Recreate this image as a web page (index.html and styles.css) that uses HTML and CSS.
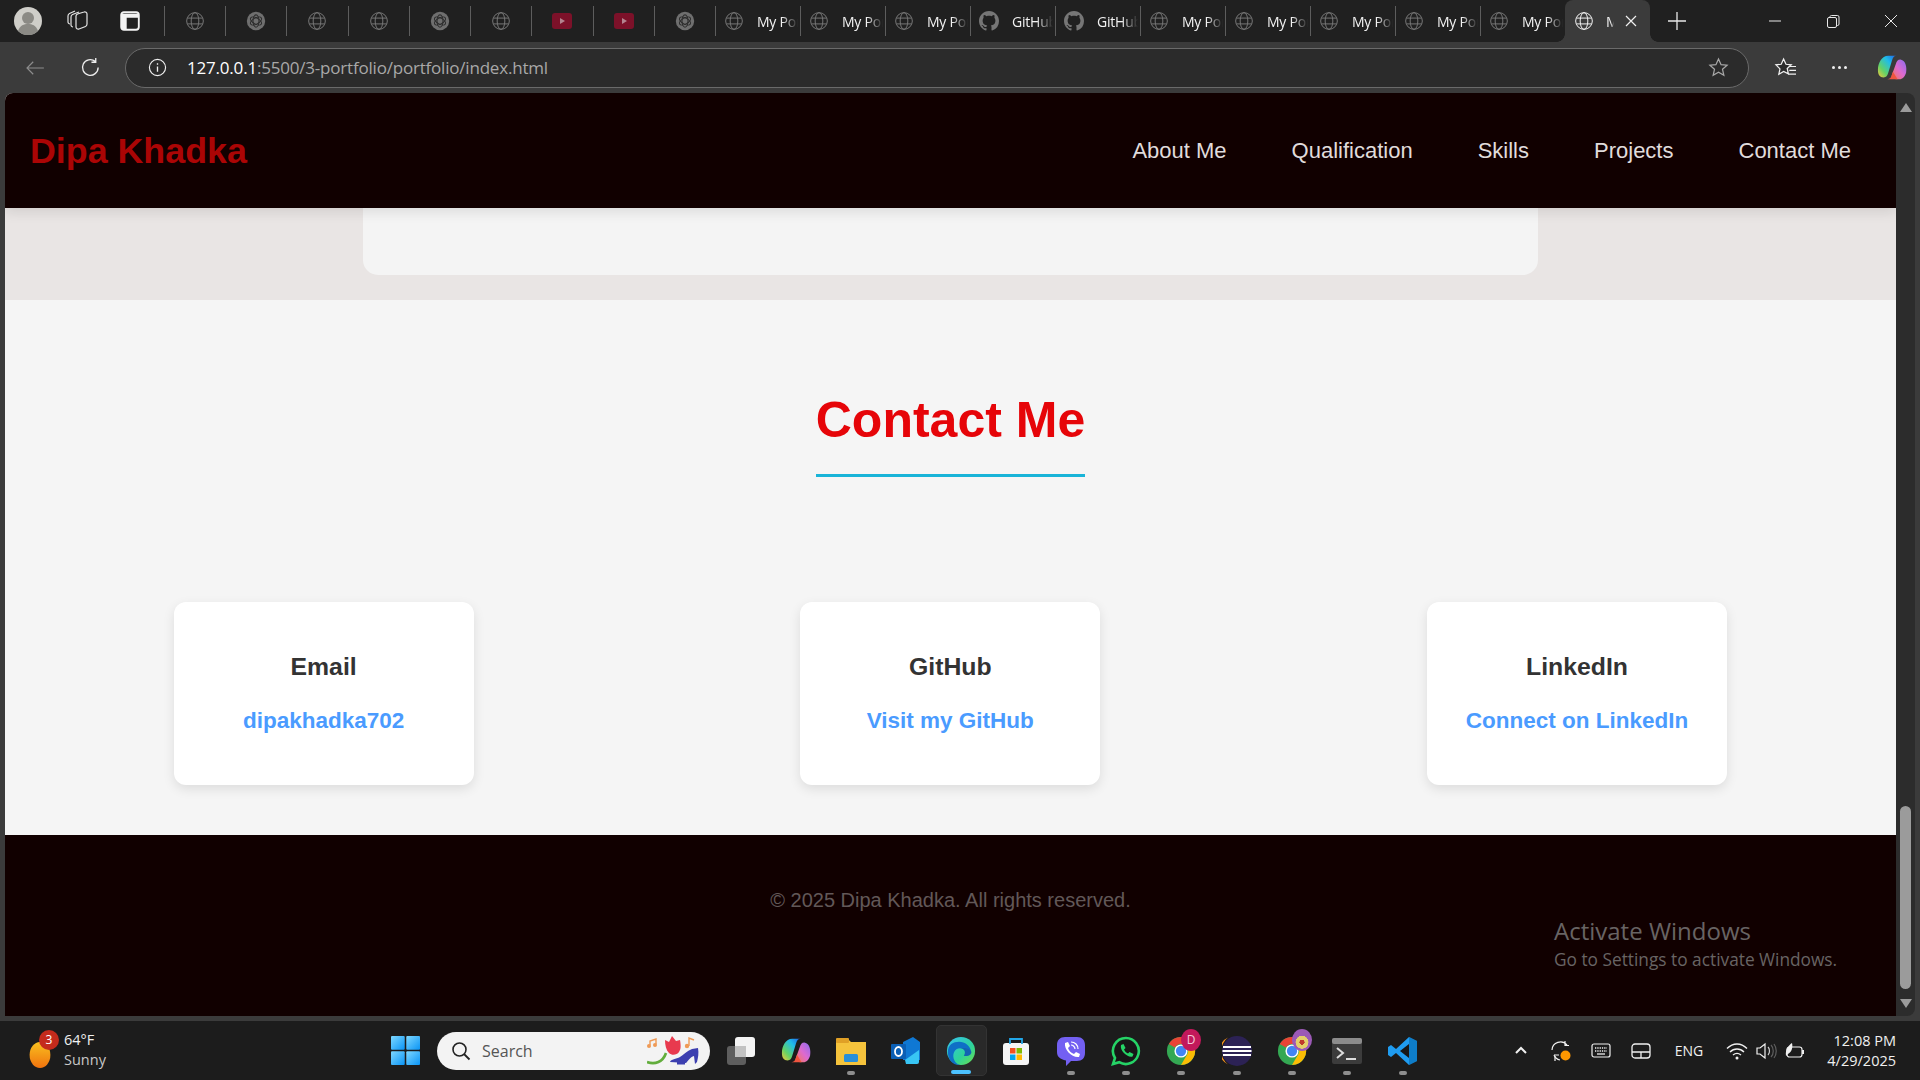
FILE: index.html
```html
<!DOCTYPE html>
<html lang="en">
<head>
<meta charset="utf-8">
<title>Dipa Khadka</title>
<link rel="stylesheet" href="styles.css">
</head>
<body>
<svg class="defs" width="0" height="0" aria-hidden="true">
  <defs>
    <linearGradient id="cpl" x1="1" y1="0" x2="0" y2="1"><stop offset="0" stop-color="#1f5fe8"/><stop offset=".35" stop-color="#20bde8"/><stop offset=".7" stop-color="#63d267"/><stop offset="1" stop-color="#f6c83a"/></linearGradient>
    <linearGradient id="cpr" x1="1" y1="0" x2="0" y2="1"><stop offset="0" stop-color="#8a6cf0"/><stop offset=".5" stop-color="#dd6ad0"/><stop offset="1" stop-color="#f6784f"/></linearGradient>
    <symbol id="globe" viewBox="0 0 24 24"><g fill="none" stroke="currentColor" stroke-width="1.2"><circle cx="12" cy="12" r="10"/><ellipse cx="12" cy="12" rx="4.6" ry="10"/><path d="M3 8.5h18M3 15.5h18"/></g></symbol>
    <symbol id="openai" viewBox="0 0 24 24"><circle cx="12" cy="12" r="11" fill="#6f6f6f"/><g fill="none" stroke="#2c2c2c" stroke-width="1.3"><ellipse cx="12" cy="12" rx="3.6" ry="7.4"/><ellipse cx="12" cy="12" rx="3.6" ry="7.4" transform="rotate(60 12 12)"/><ellipse cx="12" cy="12" rx="3.6" ry="7.4" transform="rotate(120 12 12)"/></g></symbol>
    <symbol id="yt" viewBox="0 0 20 16"><rect width="20" height="16" rx="3" fill="#7c1129"/><path d="M8 5l5 3-5 3z" fill="#b4848f"/></symbol>
    <symbol id="github" viewBox="0 0 16 16"><path fill="currentColor" d="M8 0C3.58 0 0 3.58 0 8c0 3.54 2.29 6.53 5.47 7.59.4.07.55-.17.55-.38 0-.19-.01-.82-.01-1.49-2.01.37-2.53-.49-2.69-.94-.09-.23-.48-.94-.82-1.13-.28-.15-.68-.52-.01-.53.63-.01 1.08.58 1.23.82.72 1.21 1.87.87 2.33.66.07-.52.28-.87.51-1.07-1.78-.2-3.64-.89-3.64-3.95 0-.87.31-1.59.82-2.15-.08-.2-.36-1.02.08-2.12 0 0 .67-.21 2.2.82.64-.18 1.32-.27 2-.27.68 0 1.36.09 2 .27 1.53-1.04 2.2-.82 2.2-.82.44 1.1.16 1.92.08 2.12.51.56.82 1.27.82 2.15 0 3.07-1.87 3.75-3.65 3.95.29.25.54.73.54 1.48 0 1.07-.01 1.93-.01 2.2 0 .21.15.46.55.38A8.013 8.013 0 0016 8c0-4.42-3.58-8-8-8z"/></symbol>
    <symbol id="chrome" viewBox="0 0 32 32"><circle cx="16" cy="16" r="15" fill="#34a853"/><path d="M16 1a15 15 0 0 1 13 7.5H16a7.5 7.5 0 0 0-6.5 3.75L3 8.5A15 15 0 0 1 16 1z" fill="#ea4335"/><path d="M29 8.5A15 15 0 0 1 16 31l6.5-11.25A7.5 7.5 0 0 0 22.500 12z" fill="#fbbc04"/><circle cx="16" cy="16" r="7" fill="#fff"/><circle cx="16" cy="16" r="5.500" fill="#4285f4"/></symbol>
    <symbol id="copilot" viewBox="0 0 32 32"><path d="M21 28h3c3 0 6-3 7-7 1-5 0-13-6-14-3 0-4 2-5 5l-4 11c-1 3-1 5 5 5z" fill="url(#cpr)"/><path d="M11 28c3 0 4-2 5-5l1-3 5 8z" fill="#ef5540"/><path d="M12 3h9c-3 0-4 2-5 5l-4 13c-1 3-2 5-5 5-4 0-6-3-6-8C1 11 5 3 12 3z" fill="url(#cpl)"/></symbol>
    <linearGradient id="wing" x1="0" y1="0" x2="1" y2="1"><stop offset="0" stop-color="#7ed8ff"/><stop offset="1" stop-color="#0a94f5"/></linearGradient>
    <linearGradient id="edgeg" x1="0" y1="0" x2="1" y2="1"><stop offset="0" stop-color="#35c1f1"/><stop offset=".6" stop-color="#2ed39a"/><stop offset="1" stop-color="#6fe04a"/></linearGradient>
    <linearGradient id="sun" x1="0" y1="0" x2="0" y2="1"><stop offset="0" stop-color="#f9c01f"/><stop offset="1" stop-color="#f0730e"/></linearGradient>
  </defs>
</svg>

<div class="strip">
  <div class="strip-tools">
    <svg class="avatar" viewBox="0 0 28 28"><circle cx="14" cy="14" r="14" fill="#cfcec9"/><circle cx="14" cy="11" r="6" fill="#8b8a85"/><path d="M4 24c2-6 6-7 10-7s8 1 10 7a14 14 0 0 1-20 0z" fill="#8b8a85"/></svg>
    <svg class="tool collections" viewBox="0 0 22 22"><g fill="none" stroke="#e4e4e4" stroke-width="1.200"><path d="M3 14c-1 0-2-1-2-2V6c0-1 .5-2 1.500-2.500L8 1"/><path d="M6 17c-1 0-2-1-2-2V7c0-1 .5-2 1.500-2.500L12 2"/><path d="M9 6c0-1 .5-1.500 1.500-2L17 2c1.500-.5 3 .5 3 2v10c0 1-.5 2-1.500 2.500L12 19c-1.500.5-3-.5-3-2z"/></g></svg>
    <svg class="tool vertical" viewBox="0 0 20 20"><rect x="2" y="2" width="16" height="16" rx="2.500" fill="none" stroke="#f2f2f2" stroke-width="1.700"/><path d="M2 3.500h16v3.500H7v11H4a2 2 0 0 1-2-2z" fill="#f2f2f2"/></svg>
  </div>
  <div class="pin"><svg class="fav"><use href="#globe"/></svg></div>
  <div class="pin"><svg class="fav"><use href="#openai"/></svg></div>
  <div class="pin"><svg class="fav"><use href="#globe"/></svg></div>
  <div class="pin"><svg class="fav"><use href="#globe"/></svg></div>
  <div class="pin"><svg class="fav"><use href="#openai"/></svg></div>
  <div class="pin"><svg class="fav"><use href="#globe"/></svg></div>
  <div class="pin"><svg class="fav"><use href="#yt"/></svg></div>
  <div class="pin"><svg class="fav"><use href="#yt"/></svg></div>
  <div class="pin"><svg class="fav"><use href="#openai"/></svg></div>
  <div class="tab"><svg class="fav"><use href="#globe"/></svg><span class="tab-title">My Portfolio</span></div>
  <div class="tab"><svg class="fav"><use href="#globe"/></svg><span class="tab-title">My Portfolio</span></div>
  <div class="tab"><svg class="fav"><use href="#globe"/></svg><span class="tab-title">My Portfolio</span></div>
  <div class="tab"><svg class="fav"><use href="#github"/></svg><span class="tab-title">GitHub</span></div>
  <div class="tab"><svg class="fav"><use href="#github"/></svg><span class="tab-title">GitHub</span></div>
  <div class="tab"><svg class="fav"><use href="#globe"/></svg><span class="tab-title">My Portfolio</span></div>
  <div class="tab"><svg class="fav"><use href="#globe"/></svg><span class="tab-title">My Portfolio</span></div>
  <div class="tab"><svg class="fav"><use href="#globe"/></svg><span class="tab-title">My Portfolio</span></div>
  <div class="tab"><svg class="fav"><use href="#globe"/></svg><span class="tab-title">My Portfolio</span></div>
  <div class="tab"><svg class="fav"><use href="#globe"/></svg><span class="tab-title">My Portfolio</span></div>
  <div class="tab tab-active"><svg class="fav fav-active"><use href="#globe"/></svg><span class="tab-title tab-title-short">My Portfolio</span>
    <svg class="tab-close" viewBox="0 0 12 12"><path d="M1 1l10 10M11 1L1 11" stroke="#f0f0f0" stroke-width="1.200"/></svg>
  </div>
  <svg class="newtab" viewBox="0 0 18 18"><path d="M9 0v18M0 9h18" stroke="#e8e8e8" stroke-width="1.300"/></svg>
  <div class="winctl">
    <svg class="win-btn" viewBox="0 0 14 14"><path d="M1 7h12" stroke="#e8e8e8" stroke-width="1"/></svg>
    <svg class="win-btn" viewBox="0 0 14 14"><g fill="none" stroke="#e8e8e8" stroke-width="1"><rect x="1.500" y="3.500" width="9" height="10" rx="1.500"/><path d="M4 3.500V2.500a1.500 1.500 0 0 1 1.500-1h6a1.500 1.500 0 0 1 1.500 1.500v7a1.500 1.500 0 0 1-1.500 1.500h-1"/></g></svg>
    <svg class="win-btn" viewBox="0 0 14 14"><path d="M1 1l12 12M13 1L1 13" stroke="#e8e8e8" stroke-width="1"/></svg>
  </div>
</div>

<div class="toolbar">
  <svg class="back" viewBox="0 0 22 18"><path d="M21 9H2M9 2L2 9l7 7" fill="none" stroke="#8d8d8d" stroke-width="1.300"/></svg>
  <svg class="reload" viewBox="0 0 22 22"><path d="M19 11a8.200 8.200 0 1 1-3-6.400M16.500 1v4.500H12" fill="none" stroke="#ededed" stroke-width="1.400"/></svg>
  <div class="address">
    <svg class="info" viewBox="0 0 20 20"><circle cx="10" cy="10" r="8.500" fill="none" stroke="#eee" stroke-width="1.200"/><path d="M10 9v5.500M10 5.500v1.500" stroke="#eee" stroke-width="1.400"/></svg>
    <span class="url"><span class="url-host">127.0.0.1</span>:5500/3-portfolio/portfolio/index.html</span>
    <svg class="star" viewBox="0 0 22 22"><path d="M11 2l2.700 6 6.300.6-4.800 4.300 1.400 6.300L11 16l-5.600 3.200 1.400-6.300L2 8.600 8.300 8z" fill="none" stroke="#a8a8a8" stroke-width="1.300"/></svg>
  </div>
  <svg class="favs" viewBox="0 0 24 22"><path d="M10 2l2.500 5.600 5.500.6-4.200 3.800 1.200 5.700L10 15.200 5 18.100l1.200-5.700L2 8.200l5.500-.6z" fill="#2b2b2b" stroke="#f0f0f0" stroke-width="1.300"/><path d="M16 10h7M16 14h7M15 18h8" stroke="#f0f0f0" stroke-width="1.200"/></svg>
  <div class="dots"><i></i><i></i><i></i></div>
  <svg class="edge-copilot"><use href="#copilot"/></svg>
</div>

<div class="window">
  <main class="page">
    <header class="site-header">
      <a class="logo">Dipa Khadka</a>
      <nav class="nav">
        <a>About Me</a>
        <a>Qualification</a>
        <a>Skills</a>
        <a>Projects</a>
        <a>Contact Me</a>
      </nav>
    </header>
    <section class="prev-section"><div class="prev-card"></div></section>
    <section class="contact">
      <h2 class="contact-title">Contact Me</h2>
      <div class="cards">
        <article class="card"><h3>Email</h3><a>dipakhadka702</a></article>
        <article class="card"><h3>GitHub</h3><a>Visit my GitHub</a></article>
        <article class="card"><h3>LinkedIn</h3><a>Connect on LinkedIn</a></article>
      </div>
    </section>
    <footer class="site-footer">© 2025 Dipa Khadka. All rights reserved.</footer>
    <div class="watermark"><div class="wm-title">Activate Windows</div><div class="wm-sub">Go to Settings to activate Windows.</div></div>
  </main>
  <div class="scrollbar">
    <span class="arrow-up"></span>
    <span class="thumb"></span>
    <span class="arrow-down"></span>
  </div>
</div>

<div class="taskbar">
  <div class="weather">
    <div class="weather-icon"><svg class="sun" viewBox="0 0 24 30"><ellipse cx="12" cy="15" rx="12" ry="15" fill="url(#sun)"/></svg><span class="badge">3</span></div>
    <div class="weather-text"><span class="temp">64°F</span><span class="cond">Sunny</span></div>
  </div>
  <svg class="start" viewBox="0 0 30 30"><rect width="14.200" height="14.200" rx="1" fill="url(#wing)"/><rect x="15.800" width="14.200" height="14.200" rx="1" fill="url(#wing)"/><rect y="15.800" width="14.200" height="14.200" rx="1" fill="url(#wing)"/><rect x="15.800" y="15.800" width="14.200" height="14.200" rx="1" fill="url(#wing)"/></svg>
  <div class="search">
    <svg class="search-icon" viewBox="0 0 20 20"><circle cx="8.500" cy="8.500" r="6.500" fill="none" stroke="#222" stroke-width="1.600"/><path d="M13 13l5.500 5.500" stroke="#222" stroke-width="1.800"/></svg>
    <span class="search-text">Search</span>
    <svg class="search-art" viewBox="0 0 52 30"><path d="M3 9V5l6-2v5" fill="none" stroke="#ef9a55" stroke-width="1.400"/><circle cx="2" cy="10" r="2" fill="#ef9a55"/><circle cx="8" cy="9" r="2" fill="#ef9a55"/><path d="M0 26c8 3 16 0 19-9" fill="none" stroke="#62ad3c" stroke-width="2.600"/><path d="M18 4l4 2 3-6 4 5 4-1c1 6 1 9-1 12s-7 4-10 1-4-8-4-13z" fill="#e83a4e"/><path d="M42 10V2l5 2" fill="none" stroke="#ef9a55" stroke-width="1.400"/><circle cx="40" cy="10" r="2.200" fill="#ef9a55"/><path d="M23 26c1-3 6-3 10-5 3-2 7-6 12-8l6-1c1 5 0 10-1 14l-2 2-1-8c-4 1-6 5-8 7z" fill="#3c3fb0"/><path d="M30 27h8" stroke="#3c3fb0" stroke-width="3"/></svg>
  </div>
  <div class="slot"><svg class="tb-icon" viewBox="0 0 30 30"><rect x="1" y="10" width="19" height="19" rx="3" fill="#5e5e5e"/><rect x="9" y="1" width="20" height="20" rx="3" fill="#f4f4f4"/><rect x="9" y="10" width="11" height="11" fill="#c2c2c2"/></svg></div>
  <div class="slot"><svg class="tb-icon"><use href="#copilot"/></svg></div>
  <div class="slot slot-open"><svg class="tb-icon" viewBox="0 0 30 30"><path d="M0 3h12l3 3h15v23H0z" fill="#f5c33c"/><rect y="2" width="13" height="5" rx="1" fill="#e0a026"/><rect x="8" y="18" width="14" height="8" rx="1.500" fill="#2a8fd8"/></svg></div>
  <div class="slot"><svg class="tb-icon" viewBox="0 0 30 30"><path d="M12 6l10-5 7 5v18H12z" fill="#0f78d4"/><path d="M14 24l14-10v12a2 2 0 0 1-2 2H15z" fill="#38c5f4"/><rect y="8" width="15" height="15" rx="1" fill="#0b5fb5"/><ellipse cx="7.500" cy="15.500" rx="3.500" ry="4.500" fill="none" stroke="#fff" stroke-width="1.800"/></svg></div>
  <div class="slot slot-active"><svg class="tb-icon" viewBox="0 0 32 32"><circle cx="16" cy="16" r="15" fill="url(#edgeg)"/><path d="M2 17C2 9 8 6 14 6c6 0 12 4 13 11 0 4-5 5-8 4 2-2 2-8-4-8-6 0-9 7-6 13 1 2 3 4 6 5-8 0-13-6-13-14z" fill="#0f6fc6"/><path d="M15 13c5 0 7 4 4 8 3 1 8 0 8-4-1-2-3-5-12-4z" fill="#1c4d8c" opacity=".35"/></svg></div>
  <div class="slot"><svg class="tb-icon" viewBox="0 0 30 30"><rect x="2" y="7" width="26" height="22" rx="3" fill="#f5f5f5"/><path d="M9 8V3h12v5" fill="none" stroke="#22a7e8" stroke-width="1.800"/><rect x="9" y="12" width="5.500" height="5.500" fill="#f25022"/><rect x="15.500" y="12" width="5.500" height="5.500" fill="#7fba00"/><rect x="9" y="18.500" width="5.500" height="5.500" fill="#00a4ef"/><rect x="15.500" y="18.500" width="5.500" height="5.500" fill="#ffb900"/></svg></div>
  <div class="slot slot-open"><svg class="tb-icon" viewBox="0 0 30 30"><path d="M9 1h12c5 0 8 3 8 8v8c0 5-3 8-8 8h-6l-5 5v-5.500C4 23 1 21 1 16V9c0-5 3-8 8-8z" fill="#7360f2"/><path d="M9 7l3-1 2 4-2 2c1 3 3 5 6 6l2-2 4 2-1 3c-7 1-15-7-14-14z" fill="#fff"/><path d="M15 6c4 0 7 3 7 7M15 9c2 0 4 2 4 4" fill="none" stroke="#fff" stroke-width="1.200"/></svg></div>
  <div class="slot slot-open"><svg class="tb-icon" viewBox="0 0 30 30"><path d="M15 2a13 13 0 0 0-11 20L2 28l6.200-1.800A13 13 0 1 0 15 2z" fill="#171717" stroke="#25d366" stroke-width="2.600"/><path d="M10 9l2.500-1 2 4-1.500 1.500c1 2 2 3 4 4l1.500-1.500 4 2-1 2.500c-5 1.500-13-6-11.500-11.500z" fill="#25d366"/></svg></div>
  <div class="slot slot-open"><svg class="tb-icon"><use href="#chrome"/></svg><span class="profile profile-d">D</span></div>
  <div class="slot slot-open slot-nudge"><svg class="tb-icon" viewBox="0 0 30 30"><circle cx="15" cy="15" r="15" fill="#2c2255"/><path d="M6 1.500A15 15 0 0 0 6 28.500 17 17 0 0 1 6 1.500z" fill="#f7941e"/><path d="M1 11h28M0.500 15h29M1 19h28" stroke="#fff" stroke-width="2"/></svg></div>
  <div class="slot slot-open"><svg class="tb-icon"><use href="#chrome"/></svg><span class="profile profile-a"></span></div>
  <div class="slot slot-open"><svg class="tb-icon" viewBox="0 0 30 30"><rect y="2" width="30" height="26" rx="2" fill="#3c3c3c"/><rect y="2" width="30" height="6" rx="2" fill="#8c8c8c"/><path d="M5 12l6 5-6 5" fill="none" stroke="#ddd" stroke-width="2"/><path d="M14 23h10" stroke="#ddd" stroke-width="2"/></svg></div>
  <div class="slot slot-open slot-nudge"><svg class="tb-icon" viewBox="0 0 30 30"><path d="M21 1l8 4v20l-8 4L8 17l-5 4-3-2v-8l3-2 5 4z" fill="#1f9cf0"/><path d="M21 8v14l-9-7z" fill="#171717"/><path d="M21 1l8 4v20l-8 4z" fill="#0065a9" opacity=".55"/></svg></div>
  <div class="tray">
    <span class="tray-slot"><svg class="tray-icon" viewBox="0 0 20 20"><path d="M5 11l5-5 5 5" transform="translate(0 1)" fill="none" stroke="#f0f0f0" stroke-width="2"/></svg></span>
    <span class="tray-slot"><svg class="tray-sync" viewBox="0 0 22 22"><path d="M2 10a8.500 8.500 0 0 1 15-5M15 1v4.500h4M4 15h5M5 21v-5" fill="none" stroke="#f0f0f0" stroke-width="1.200"/><path d="M4 15a8 8 0 0 0 6 5" fill="none" stroke="#f0f0f0" stroke-width="1.200"/><circle cx="15.500" cy="15.500" r="5" fill="#ff9800"/></svg></span>
    <span class="tray-slot"><svg class="tray-wide" viewBox="0 0 20 16"><rect x="1" y="1" width="18" height="13" rx="2" fill="none" stroke="#f0f0f0" stroke-width="1.200"/><path d="M4 5h12M4 8h12" stroke="#f0f0f0" stroke-width="1.500" stroke-dasharray="1.300 1"/><path d="M6 11h8" stroke="#f0f0f0" stroke-width="1.300"/></svg></span>
    <span class="tray-slot"><svg class="tray-wide" viewBox="0 0 20 16"><rect x="1" y="1" width="18" height="14" rx="3" fill="none" stroke="#f0f0f0" stroke-width="1.300"/><path d="M1 9h18M10 9v6" stroke="#f0f0f0" stroke-width="1.300"/></svg></span>
    <span class="tray-lang">ENG</span>
    <span class="tray-net"><svg class="tray-wifi" viewBox="0 0 22 18"><path d="M1 6.500c6-6 14-6 20 0M4 10c4-4 10-4 14 0M7 13c2.500-2 5.500-2 8 0" fill="none" stroke="#f0f0f0" stroke-width="1.400"/><circle cx="11" cy="16" r="1.500" fill="#f0f0f0"/></svg></span>
    <span class="tray-net"><svg class="tray-vol" viewBox="0 0 22 18"><path d="M2 6h3l5-4v14l-5-4H2z" fill="none" stroke="#f0f0f0" stroke-width="1.200"/><path d="M13 5c2 2 2 6 0 8" fill="none" stroke="#d0d0d0" stroke-width="1.200"/><path d="M16 3c3 3 3 9 0 12M19 2c3 4 3 10 0 14" fill="none" stroke="#5f5f5f" stroke-width="1.200"/></svg></span>
    <span class="tray-bat"><svg class="tray-batt" viewBox="0 0 22 18"><rect x="3" y="5" width="15" height="10" rx="2.500" fill="none" stroke="#f0f0f0" stroke-width="1.200"/><path d="M19 8v4" stroke="#f0f0f0" stroke-width="2"/><path d="M2 14C1 7 5 3 8 1c1 4 0 9-4 11z" fill="#f0f0f0"/></svg></span>
    <div class="clock"><span>12:08 PM</span><span>4/29/2025</span></div>
  </div>
</div>
</body>
</html>
```

FILE: styles.css
```css
* { box-sizing: border-box; }
html, body { margin: 0; padding: 0; }
body {
  width: 1920px;
  height: 1080px;
  overflow: hidden;
  background: #3b3b3b;
  font-family: "Liberation Sans", Arial, sans-serif;
}
.defs { position: absolute; }
a { text-decoration: none; }

/* tab strip */
.strip { height: 42px; background: #202020; display: flex; align-items: center; }
.strip-tools { width: 164px; flex: none; display: flex; align-items: center; padding-left: 14px; }
.avatar { width: 28px; height: 28px; }
.tool { width: 22px; height: 22px; }
.collections { margin-left: 25px; }
.vertical { margin-left: 30px; }
.pin {
  width: 61.220px; height: 30px; display: flex; align-items: center;
  padding-left: 20px; border-left: 1px solid #5d5d5d; flex: none;
}
.fav { width: 20px; height: 20px; color: #767676; flex: none; }
.fav-active { color: #f2f2f2; }
.tab {
  width: 85px; height: 30px; display: flex; align-items: center; flex: none;
  padding-left: 8px; border-left: 1px solid #5d5d5d; overflow: hidden;
}
.tab-title {
  margin-left: 13px; font: 14px "Open Sans", sans-serif; letter-spacing: -.2px; color: #f2f2f2;
  width: 41px; overflow: hidden; white-space: nowrap; flex: none;
  -webkit-mask-image: linear-gradient(90deg, #000 60%, transparent 100%);
  mask-image: linear-gradient(90deg, #000 60%, transparent 100%);
}
.tab-active {
  height: 42px; width: 85px; background: #3b3b3b; border-left: 0; position: relative; overflow: visible;
  border-radius: 8px 8px 0 0; align-self: flex-end; padding-left: 9px;
}
.tab-active::before, .tab-active::after {
  content: ""; position: absolute; bottom: 0; width: 8px; height: 8px;
}
.tab-active::before { left: -8px; background: radial-gradient(circle at 0 0, #202020 7.500px, #3b3b3b 8px); }
.tab-active::after { right: -8px; background: radial-gradient(circle at 100% 0, #202020 7.500px, #3b3b3b 8px); }
.tab-title-short { width: 8px; margin-left: 12px; }
.tab-close { width: 12px; height: 12px; margin-left: 11px; flex: none; }
.newtab { width: 18px; height: 18px; margin-left: 18px; flex: none; }
.winctl { margin-left: auto; display: flex; gap: 44px; padding-right: 22px; }
.win-btn { width: 14px; height: 14px; }

/* toolbar */
.toolbar { height: 51px; background: #3b3b3b; display: flex; align-items: center; padding-left: 25px; }
.back { width: 20px; height: 16px; }
.reload { width: 21px; height: 21px; margin-left: 35px; }
.address {
  width: 1624px; height: 40px; margin-left: 24px; border: 1px solid #6a6a6a; border-radius: 20px;
  background: #2b2b2b; display: flex; align-items: center; padding-left: 22px;
}
.info { width: 19px; height: 19px; }
.url { margin-left: 20px; font: 17px "Open Sans", sans-serif; letter-spacing: -.2px; color: #a8a8a8; }
.url-host { color: #fff; }
.star { width: 21px; height: 21px; margin-left: auto; margin-right: 19px; }
.favs { width: 23px; height: 21px; margin-left: 25px; }
.dots { display: flex; gap: 3px; margin-left: 35px; }
.dots i { width: 3px; height: 3px; background: #f0f0f0; border-radius: 50%; }
.edge-copilot { width: 30px; height: 30px; margin-left: 30px; }

/* page window */
.window { height: 923px; margin-left: 5px; width: 1910px; display: flex; }
.page {
  width: 1891px; height: 923px; position: relative; overflow: hidden;
  display: flex; flex-direction: column; background: #f5f5f5; border-radius: 8px 0 0 0;
}
.site-header {
  height: 115px; flex: none; background: #110000; display: flex; align-items: center;
  justify-content: space-between; padding: 0 45px 0 25px; position: relative; z-index: 2;
  box-shadow: 0 4px 12px rgba(0, 0, 0, .1);
}
.logo { font-size: 35.800px; font-weight: 700; color: #ab0505; position: relative; top: 1px; }
.nav { display: flex; gap: 65px; }
.nav a { font-size: 22px; color: #e0dcdc; }
.prev-section { height: 92px; flex: none; background: #e9e5e4; padding: 0 358px 0 358px; }
.prev-card { height: 67px; background: #f4f4f4; border-radius: 0 0 15px 15px; }
.contact { height: 535px; flex: none; background: #f5f5f5; display: flex; flex-direction: column; align-items: center; padding-top: 91px; }
.contact-title {
  margin: 0; font-size: 50px; line-height: 58px; font-weight: 700; color: #e60509;
  padding-bottom: 25px; border-bottom: 3px solid #19b4d8;
}
.cards { width: 100%; display: flex; justify-content: space-between; padding: 0 169px 0 168.600px; margin-top: 125px; }
.card {
  width: 300px; height: 183px; background: #fff; border-radius: 12px;
  box-shadow: 0 4px 12px rgba(0, 0, 0, .1); text-align: center; padding-top: 50px;
}
.card h3 { margin: 0; font-size: 24.800px; line-height: 30px; color: #333; }
.card a { display: block; margin-top: 25px; font-size: 22.500px; line-height: 28px; font-weight: 700; color: #4a9bff; }
.site-footer {
  flex: 1; background: #110000; color: #625858; font-size: 20px; text-align: center; padding-top: 54px;
}
.watermark { position: absolute; left: 1549px; top: 821px; color: #686464; font-family: "Open Sans", sans-serif; }
.wm-title { font-size: 24px; line-height: 33px; }
.wm-sub { font-size: 17.300px; line-height: 26px; }

/* scrollbar */
.scrollbar {
  width: 19px; height: 923px; background: #2c2c2c; border-radius: 0 8px 8px 0;
  display: flex; flex-direction: column; align-items: center; padding: 10px 0 8px;
}
.arrow-up { border: 6px solid transparent; border-top: 0; border-bottom: 9px solid #9b9b9b; }
.thumb { width: 11px; height: 183px; margin-top: auto; background: #9b9b9b; border-radius: 6px; }
.arrow-down { margin-top: 10px; border: 6px solid transparent; border-bottom: 0; border-top: 9px solid #9b9b9b; }

/* taskbar */
.taskbar {
  position: absolute; left: 0; top: 1021px; width: 1920px; height: 59px; background: #1c1c1c;
  display: flex; align-items: center;
}
.weather { width: 391px; display: flex; align-items: center; padding-left: 28px; flex: none; }
.weather-icon { width: 30px; height: 36px; position: relative; margin-top: 2px; }
.sun { width: 24px; height: 26px; position: absolute; left: 0; top: 8px; }
.badge {
  position: absolute; left: 11px; top: -4px; width: 20px; height: 20px; border-radius: 50%;
  background: #c42b1c; color: #fff; font: 12px/20px "Open Sans", sans-serif; text-align: center;
}
.weather-text { display: flex; flex-direction: column; margin-left: 6px; margin-top: -2px; font: 14.500px/20px "Open Sans", sans-serif; color: #f0f0f0; }
.cond { color: #c8c8c8; }
.start { width: 29px; height: 29px; flex: none; }
.search {
  width: 273px; height: 38px; margin-left: 17px; background: #f3f3f3; border-radius: 19px;
  display: flex; align-items: center; padding-left: 14px; flex: none;
}
.search-icon { width: 20px; height: 20px; }
.search-text { margin-left: 11px; font: 16px "Open Sans", sans-serif; color: #555; }
.search-art { width: 52px; height: 30px; margin-left: auto; margin-right: 11px; }
.slot { width: 55px; height: 59px; flex: none; display: flex; align-items: center; justify-content: center; position: relative; }
.search + .slot { margin-left: 3px; }
.slot-nudge { margin-left: 1px; }
.slot-open::after, .slot-active::after {
  content: ""; position: absolute; bottom: 5px; left: 50%; width: 8px; height: 4px; margin-left: -4px;
  background: #8e8e8e; border-radius: 2px;
}
.slot-active::before {
  content: ""; position: absolute; left: 3px; top: 4px; width: 49px; height: 49px;
  background: #292929; border: 1px solid #333; border-radius: 5px;
}
.slot-active::after { width: 20px; margin-left: -10px; background: #4cc2ff; bottom: 6px; }
.tb-icon { width: 30px; height: 30px; position: relative; }
.profile { position: absolute; width: 20px; height: 22px; border-radius: 50%; left: 28px; top: 8px; }
.profile-d { background: #c2185b; color: #f5c9d9; font: 12px/22px "Open Sans", sans-serif; text-align: center; }
.profile-a { background: radial-gradient(circle at 50% 60%, #c0392b 0 15%, #e4cf6a 16% 38%, #9b59b6 40%); }
.tray { margin-left: auto; display: flex; align-items: center; padding-right: 24px; color: #f0f0f0; }
.tray-slot { width: 40px; display: flex; justify-content: center; }
.tray-icon { width: 20px; height: 20px; }
.tray-sync { width: 22px; height: 22px; }
.tray-wide { width: 20px; height: 16px; }
.tray-lang { width: 56px; margin-right: 5px; text-align: center; font: 14px "Open Sans", sans-serif; }
.tray-net { width: 29px; display: flex; justify-content: center; }
.tray-wifi, .tray-vol, .tray-batt { width: 22px; height: 18px; }
.tray-bat { width: 30px; display: flex; justify-content: center; margin-right: 15px; }
.clock { width: 71px; display: flex; flex-direction: column; align-items: flex-end; font: 14.500px/20px "Open Sans", sans-serif; }
```
